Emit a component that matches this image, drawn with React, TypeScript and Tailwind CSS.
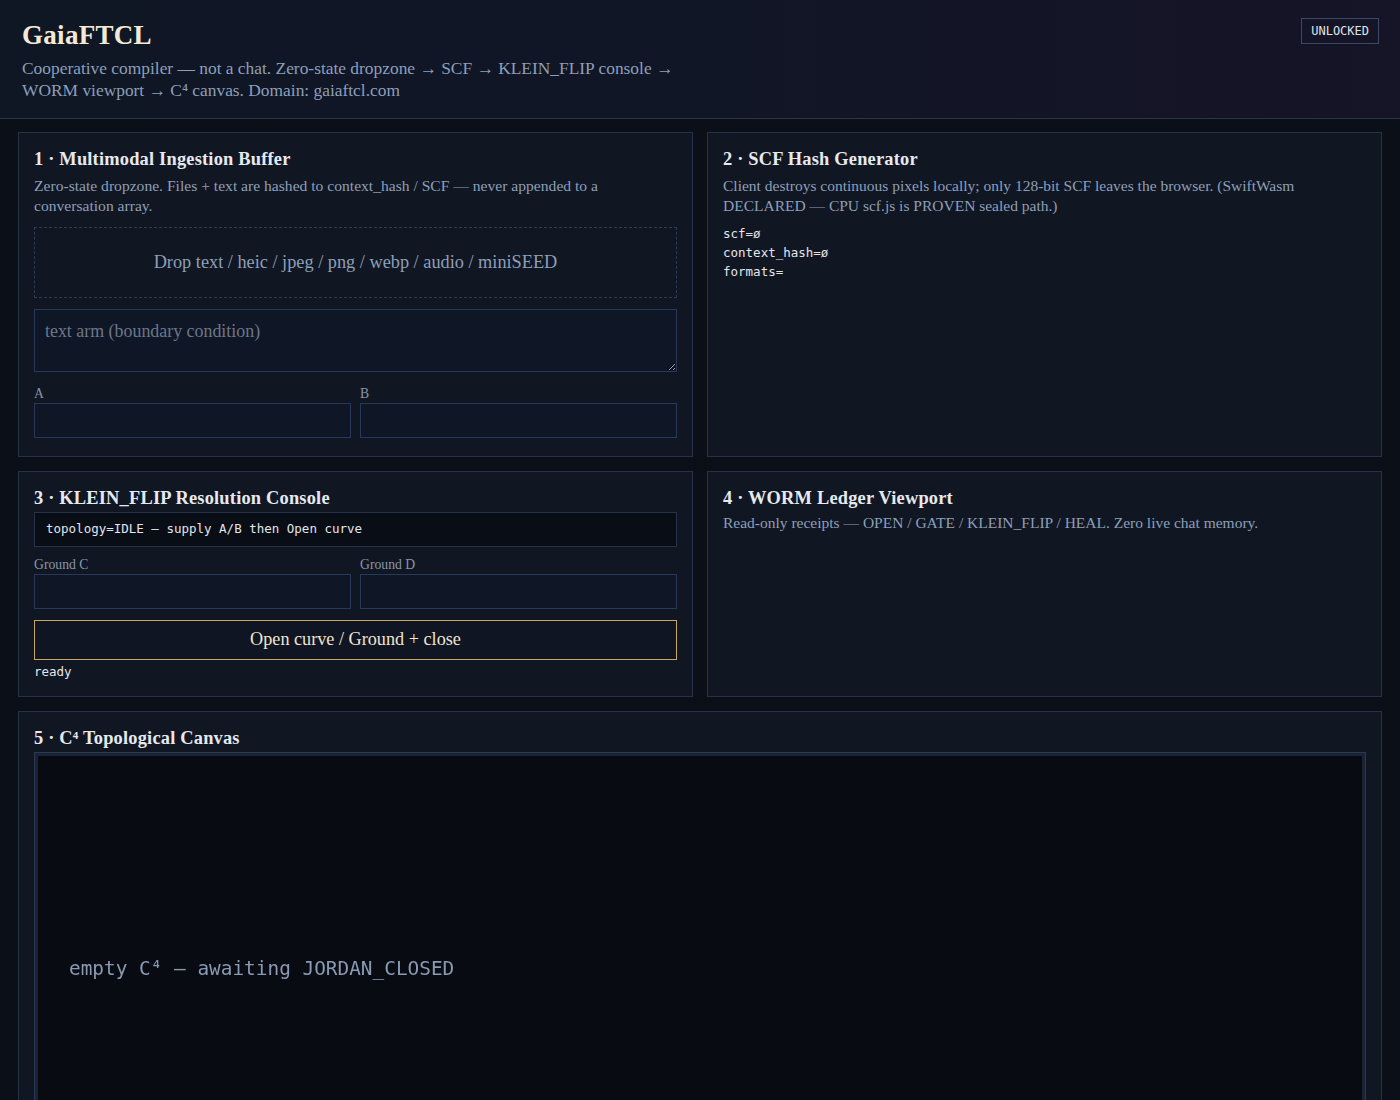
import React from "react";

const serif = "font-['Liberation_Serif','DejaVu_Serif',serif]";
const mono = "font-['DejaVu_Sans_Mono','Liberation_Mono',monospace]";

function Panel({ title, children, className = "" }: { title: React.ReactNode; children?: React.ReactNode; className?: string }) {
  return (
    <section className={`border border-[#253249] bg-[#111722] px-[15px] pt-[14px] ${className}`}>
      <h2 className="text-[18.4px] font-bold leading-[24px] tracking-[0.2px] text-[#e6e9ef]">{title}</h2>
      {children}
    </section>
  );
}

function Field({ label }: { label: string }) {
  return (
    <label className="flex flex-col">
      <span className="text-[13.7px] leading-[18px] text-[#8796ad]">{label}</span>
      <input className="h-[35px] border border-[#27385a] bg-[#0f1626] px-2 text-[#d6dbe4] outline-none" />
    </label>
  );
}

export default function App() {
  return (
    <div className={`min-h-screen bg-[#0b0f17] ${serif}`}>
      {/* Header */}
      <header className="flex items-start justify-between border-b border-[#2a3548] bg-gradient-to-r from-[#0f1624] via-[#111626] to-[#161427] px-[22px] pt-[17px] pb-[17px]">
        <div>
          <h1 className="text-[27px] font-bold leading-[36px] tracking-[0.3px] text-[#f3ead6]">GaiaFTCL</h1>
          <p className="mt-[4px] max-w-[680px] text-[17.4px] leading-[22px] text-[#8d9fba]">
            Cooperative compiler — not a chat. Zero-state dropzone → SCF → KLEIN_FLIP console → WORM viewport → C⁴ canvas. Domain: gaiaftcl.com
          </p>
        </div>
        <span className={`mt-[1px] -mr-[1px] border border-[#3a4a66] px-[9px] py-[4px] text-[12px] leading-[16px] text-[#dfe3ea] ${mono}`}>
          UNLOCKED
        </span>
      </header>

      <main className="grid grid-cols-2 gap-[14px] px-[18px] pt-[13px]">
        <Panel title="1 · Multimodal Ingestion Buffer" className="pb-[18px]">
          <p className="mt-[5px] text-[15.6px] leading-[20px] text-[#8d9fba]">
            Zero-state dropzone. Files + text are hashed to context_hash / SCF — never appended to a conversation array.
          </p>
          <div className="mt-[11px] flex h-[71px] items-center justify-center border border-dashed border-[#2b3a55] text-[18.3px] text-[#8d9fba]">
            Drop text / heic / jpeg / png / webp / audio / miniSEED
          </div>
          <textarea
            placeholder="text arm (boundary condition)"
            className="mt-[11px] block h-[63px] w-full resize-y border border-[#27385a] bg-[#0f1626] px-[10px] py-[8px] text-[17.9px] text-[#d6dbe4] outline-none placeholder:text-[#6b778a]"
          />
          <div className="mt-[13px] grid grid-cols-2 gap-[9px]">
            <Field label="A" />
            <Field label="B" />
          </div>
        </Panel>

        <Panel title="2 · SCF Hash Generator" className="pb-5">
          <p className="mt-[5px] text-[15.5px] leading-[20px] text-[#8d9fba]">
            Client destroys continuous pixels locally; only 128-bit SCF leaves the browser. (SwiftWasm DECLARED — CPU scf.js is PROVEN sealed path.)
          </p>
          <pre className={`mt-[8px] text-[12.5px] leading-[19px] text-[#e3e6ec] ${mono}`}>{"scf=ø\ncontext_hash=ø\nformats="}</pre>
        </Panel>

        <Panel title="3 · KLEIN_FLIP Resolution Console" className="pb-[15px]">
          <div className={`mt-[2px] flex h-[35px] items-center border border-[#253249] bg-[#090d15] px-[11px] text-[12.5px] text-[#e3e6ec] ${mono}`}>
            topology=IDLE — supply A/B then Open curve
          </div>
          <div className="mt-[9px] grid grid-cols-2 gap-[9px]">
            <Field label="Ground C" />
            <Field label="Ground D" />
          </div>
          <button className="mt-[11px] h-[40px] w-full border border-[#c9a563] bg-[#0f1522] text-[18.2px] text-[#f0e6cf]">
            Open curve / Ground + close
          </button>
          <div className={`mt-[3px] text-[12.5px] leading-[18px] text-[#e3e6ec] ${mono}`}>ready</div>
        </Panel>

        <Panel title="4 · WORM Ledger Viewport" className="pb-5">
          <p className="mt-[3px] text-[15.5px] leading-[20px] text-[#8d9fba]">
            Read-only receipts — OPEN / GATE / KLEIN_FLIP / HEAL. Zero live chat memory.
          </p>
        </Panel>

        <section className="col-span-2 border border-[#253249] bg-[#111722] px-[15px] pt-[14px]">
          <h2 className="text-[18.4px] font-bold leading-[24px] tracking-[0.2px] text-[#e6e9ef]">5 · C⁴ Topological Canvas</h2>
          <div className="mt-[2px] h-[400px] border border-[#2b3a55] bg-[#1a2336] p-[3px]">
            <div className="flex h-full items-start bg-[#080b12] pl-[31px] pt-[198px]">
              <span className={`text-[19.4px] text-[#8a9ab3] blur-[0.3px] ${mono}`}>empty C⁴ — awaiting JORDAN_CLOSED</span>
            </div>
          </div>
        </section>
      </main>
    </div>
  );
}
